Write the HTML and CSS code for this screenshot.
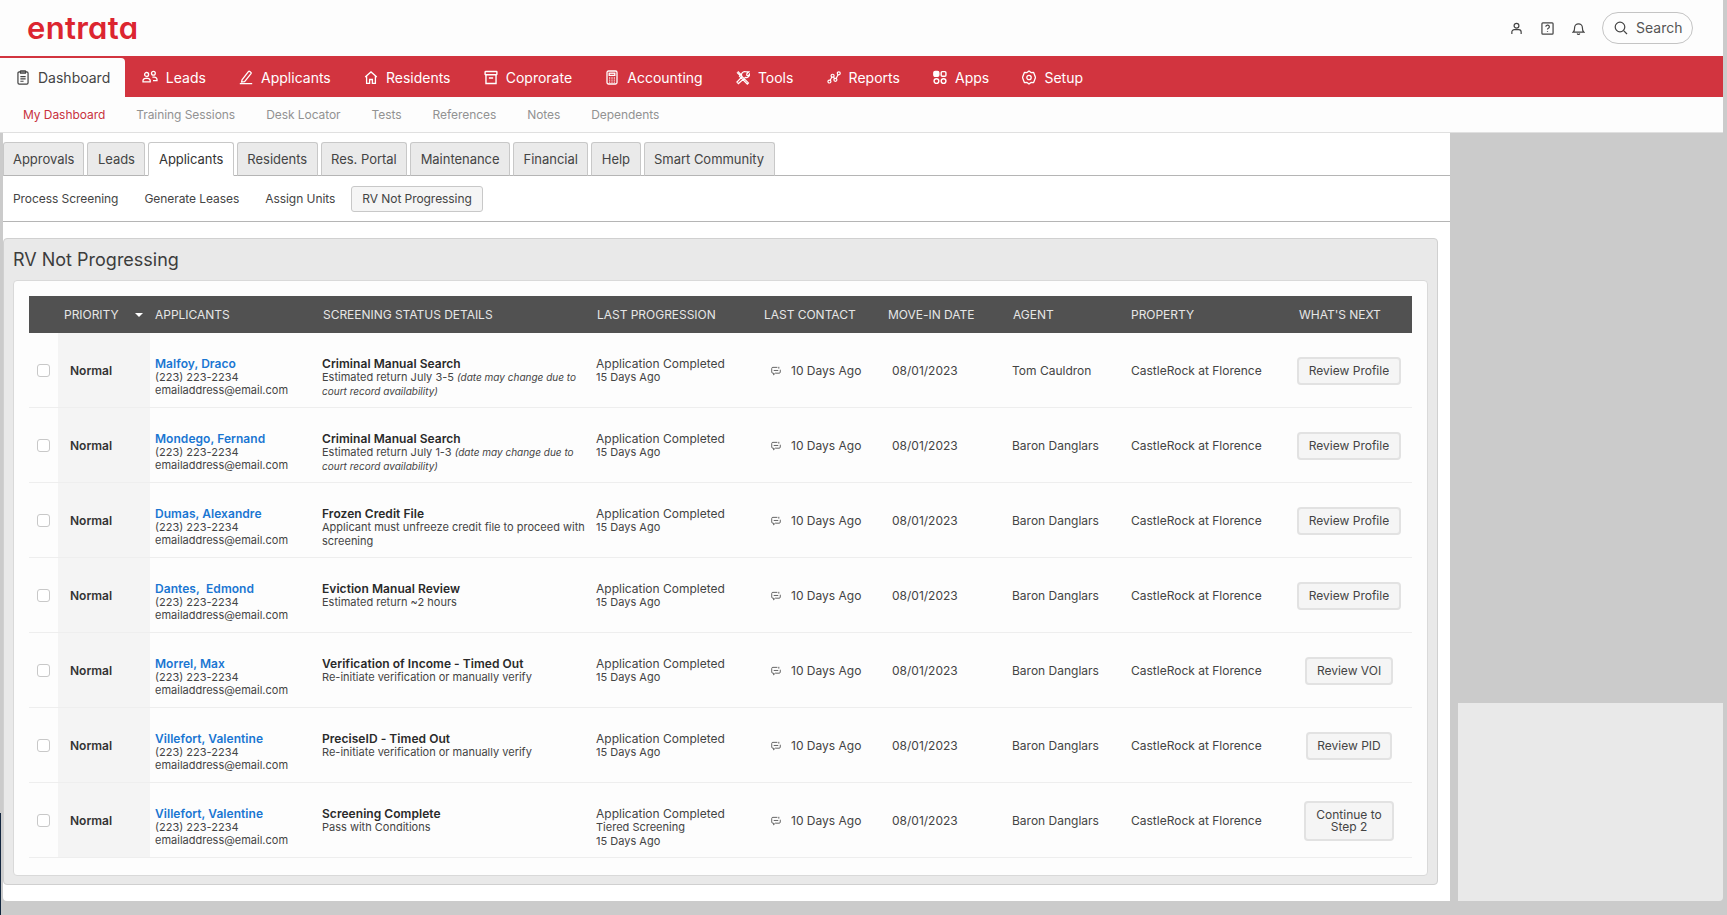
FILE: index.html
```html
<!DOCTYPE html>
<html lang="en">
<head>
<meta charset="utf-8">
<title>RV Not Progressing</title>
<link rel="stylesheet" href="styles.css">
</head>
<body>
<svg class="sprite" aria-hidden="true">
  <symbol id="i-dash" viewBox="0 0 14 16"><rect x="1.6" y="2" width="10.8" height="13" rx="1.4"/><rect x="4.2" y="0.8" width="5.6" height="2.6" rx=".6"/><path d="M4.2 7h5.6M4.2 9.5h5.6M4.2 12h3.4"/></symbol>
  <symbol id="i-leads" viewBox="0 0 16 14"><circle cx="4.6" cy="4" r="2"/><circle cx="11.4" cy="2.8" r="1.9"/><path d="M1 11.4V10a2.6 2.6 0 0 1 2.6-2.2h2A2.6 2.6 0 0 1 8.2 10v1.4zM10.4 6.6h1.8A2.6 2.6 0 0 1 15 9v1.2h-4"/></symbol>
  <symbol id="i-pen" viewBox="0 0 14 14"><path d="M3 9.4 9.4 1.2a1 1 0 0 1 1.4-.2l1 .8a1 1 0 0 1 .2 1.4L5.6 11.2l-3 .4zM.8 13.2h12.4"/></symbol>
  <symbol id="i-home" viewBox="0 0 14 14"><path d="M1.2 6.4 7 1.4l5.8 5M2.6 5.4v7.4h3V9h2.8v3.8h3V5.4"/></symbol>
  <symbol id="i-box" viewBox="0 0 13 14"><rect x="1" y="1.4" width="11" height="3" rx=".4"/><path d="M1.8 4.4v8.2h9.4V4.4M4.5 7.4h4"/></symbol>
  <symbol id="i-calc" viewBox="0 0 12 15"><rect x="1" y="1" width="10" height="13" rx="1.5"/><rect x="3.2" y="3.2" width="5.6" height="2.2"/><path d="M3.2 8h1M5.5 8h1M7.8 8h1M3.2 10.2h1M5.5 10.2h1M7.8 10.2h1M3.2 12.2h1M5.5 12.2h1M7.8 12.2h1"/></symbol>
  <symbol id="i-tools" viewBox="0 0 15 15"><path d="M2 1 5 4 4 5 1 2M4.5 4.5l8.8 8.8-1.2 1.2-8.8-8.8M13.8 1.4l-2.3 2.2.2 1.6 1.6.2 1.2-1.6a3.4 3.4 0 0 1-4.4 3.6L2.6 14 1 12.4l5.6-5.8a3.4 3.4 0 0 1 4-5.2z"/></symbol>
  <symbol id="i-reports" viewBox="0 0 15 15"><circle cx="2.6" cy="11.8" r="1.6"/><circle cx="6" cy="5.6" r="1.6"/><circle cx="9" cy="10" r="1.6"/><circle cx="12.6" cy="3" r="1.6"/><path d="M3.4 10.4l1.8-3.4M7 7l1.2 1.6M9.8 8.6l2-4"/></symbol>
  <symbol id="i-apps" viewBox="0 0 13 13"><rect class="solid" x=".8" y=".8" width="4.6" height="4.6" rx="1.2"/><rect x="7.6" y="1" width="4.4" height="4.4" rx="1"/><circle cx="3.2" cy="9.8" r="2.2"/><circle cx="9.8" cy="9.8" r="2.2"/></symbol>
  <symbol id="i-gear" viewBox="0 0 14 15"><path d="M7 1 9 2.600l2.600-.2.9 2.400 1 2.700-1 2.700-.9 2.400L9 12.400 7 14l-2-1.600-2.600.2-.9-2.400L.5 7.500l1-2.700.9-2.400L5 2.600z" stroke-linejoin="round"/><circle cx="7" cy="7.500" r="2.200"/></symbol>
  <symbol id="i-chat" viewBox="0 0 11 10"><path d="M7 1H2A1.200 1.200 0 0 0 .8 2.200v4A1.200 1.200 0 0 0 2 7.400h.8v1.800l2-1.800H9a1.200 1.200 0 0 0 1.200-1.200V3.600M3 4.400h5M8.600 .4v2"/></symbol>
</svg>

<div class="dark-edge"></div>

<header class="top">
  <div class="brand-row">
    <div class="logo">entrata</div>
    <div class="tools">
      <svg class="ti" viewBox="0 0 14 14"><circle cx="7" cy="4" r="2.600"/><path d="M2 13v-2.200A2.600 2.600 0 0 1 4.600 8.200h4.800A2.600 2.600 0 0 1 12 10.800V13"/></svg>
      <svg class="ti" viewBox="0 0 14 14"><rect x="1" y="1" width="12" height="12" rx="1"/><path d="M5.200 5.200A1.900 1.900 0 1 1 7.600 7c-.5.2-.6.6-.6 1.200M7 9.600v1"/></svg>
      <svg class="ti" viewBox="0 0 14 14"><path d="M1.400 10.800c1.200-1 1.400-2 1.400-4.600a4.200 4.200 0 0 1 8.400 0c0 2.600.2 3.600 1.400 4.600zM5.600 12.400a1.500 1.500 0 0 0 2.800 0"/></svg>
      <div class="search">
        <svg class="si" viewBox="0 0 14 14"><circle cx="6" cy="6" r="4.800"/><path d="M9.600 9.600 13 13"/></svg>
        <span>Search</span>
      </div>
    </div>
  </div>
  <nav class="mainnav">
    <a class="mn active"><svg class="mi"><use href="#i-dash"/></svg>Dashboard</a>
    <a class="mn"><svg class="mi wide"><use href="#i-leads"/></svg>Leads</a>
    <a class="mn"><svg class="mi"><use href="#i-pen"/></svg>Applicants</a>
    <a class="mn"><svg class="mi"><use href="#i-home"/></svg>Residents</a>
    <a class="mn"><svg class="mi"><use href="#i-box"/></svg>Coprorate</a>
    <a class="mn"><svg class="mi"><use href="#i-calc"/></svg>Accounting</a>
    <a class="mn"><svg class="mi"><use href="#i-tools"/></svg>Tools</a>
    <a class="mn"><svg class="mi"><use href="#i-reports"/></svg>Reports</a>
    <a class="mn"><svg class="mi"><use href="#i-apps"/></svg>Apps</a>
    <a class="mn"><svg class="mi"><use href="#i-gear"/></svg>Setup</a>
  </nav>
  <nav class="subnav">
    <a class="on">My Dashboard</a><a>Training Sessions</a><a>Desk Locator</a><a>Tests</a><a>References</a><a>Notes</a><a>Dependents</a>
  </nav>
</header>

<div class="body-row">
  <main class="content">
    <div class="tabs">
      <a class="tab">Approvals</a><a class="tab">Leads</a><a class="tab sel">Applicants</a><a class="tab">Residents</a><a class="tab">Res. Portal</a><a class="tab">Maintenance</a><a class="tab">Financial</a><a class="tab">Help</a><a class="tab">Smart Community</a>
    </div>
    <div class="subtabs">
      <a>Process Screening</a><a>Generate Leases</a><a>Assign Units</a><a class="cur">RV Not Progressing</a>
    </div>
    <section class="panel">
      <h1>RV Not Progressing</h1>
      <div class="card">
        <table>
          <colgroup>
            <col class="c1"><col class="c2"><col class="c3"><col class="c4"><col class="c5"><col class="c6"><col class="c7"><col class="c8"><col class="c9"><col class="c10">
          </colgroup>
          <thead>
            <tr>
              <th></th>
              <th class="h-pri">PRIORITY<span class="caret"></span></th>
              <th class="h-app">APPLICANTS</th>
              <th class="h-scr">SCREENING STATUS DETAILS</th>
              <th class="h-lp">LAST PROGRESSION</th>
              <th class="h-lc">LAST CONTACT</th>
              <th class="h-mi">MOVE-IN DATE</th>
              <th class="h-ag">AGENT</th>
              <th class="h-pr">PROPERTY</th>
              <th class="h-nx">WHAT'S NEXT</th>
            </tr>
          </thead>
          <tbody>
            <tr>
              <td class="chk"><span class="box"></span></td><td class="pri">Normal</td>
              <td class="top app"><a class="name">Malfoy, Draco</a><br>(223) 223-2234<br>emailaddress@email.com</td>
              <td class="top scr"><b>Criminal Manual Search</b><br><span class="sm">Estimated return July 3-5 <i>(date may change due to court record availability)</i></span></td>
              <td class="top lp">Application Completed<br><span class="sm">15 Days Ago</span></td>
              <td class="lc"><svg class="chat"><use href="#i-chat"/></svg>10 Days Ago</td>
              <td class="mi-d">08/01/2023</td><td class="ag">Tom Cauldron</td><td class="pr">CastleRock at Florence</td>
              <td class="nx"><a class="btn">Review Profile</a></td>
            </tr>
            <tr>
              <td class="chk"><span class="box"></span></td><td class="pri">Normal</td>
              <td class="top app"><a class="name">Mondego, Fernand</a><br>(223) 223-2234<br>emailaddress@email.com</td>
              <td class="top scr"><b>Criminal Manual Search</b><br><span class="sm">Estimated return July 1-3 <i>(date may change due to court record availability)</i></span></td>
              <td class="top lp">Application Completed<br><span class="sm">15 Days Ago</span></td>
              <td class="lc"><svg class="chat"><use href="#i-chat"/></svg>10 Days Ago</td>
              <td class="mi-d">08/01/2023</td><td class="ag">Baron Danglars</td><td class="pr">CastleRock at Florence</td>
              <td class="nx"><a class="btn">Review Profile</a></td>
            </tr>
            <tr>
              <td class="chk"><span class="box"></span></td><td class="pri">Normal</td>
              <td class="top app"><a class="name">Dumas, Alexandre</a><br>(223) 223-2234<br>emailaddress@email.com</td>
              <td class="top scr"><b>Frozen Credit File</b><br><span class="sm">Applicant must unfreeze credit file to proceed with screening</span></td>
              <td class="top lp">Application Completed<br><span class="sm">15 Days Ago</span></td>
              <td class="lc"><svg class="chat"><use href="#i-chat"/></svg>10 Days Ago</td>
              <td class="mi-d">08/01/2023</td><td class="ag">Baron Danglars</td><td class="pr">CastleRock at Florence</td>
              <td class="nx"><a class="btn">Review Profile</a></td>
            </tr>
            <tr>
              <td class="chk"><span class="box"></span></td><td class="pri">Normal</td>
              <td class="top app"><a class="name">Dantes,&nbsp; Edmond</a><br>(223) 223-2234<br>emailaddress@email.com</td>
              <td class="top scr"><b>Eviction Manual Review</b><br><span class="sm">Estimated return ~2 hours</span></td>
              <td class="top lp">Application Completed<br><span class="sm">15 Days Ago</span></td>
              <td class="lc"><svg class="chat"><use href="#i-chat"/></svg>10 Days Ago</td>
              <td class="mi-d">08/01/2023</td><td class="ag">Baron Danglars</td><td class="pr">CastleRock at Florence</td>
              <td class="nx"><a class="btn">Review Profile</a></td>
            </tr>
            <tr>
              <td class="chk"><span class="box"></span></td><td class="pri">Normal</td>
              <td class="top app"><a class="name">Morrel, Max</a><br>(223) 223-2234<br>emailaddress@email.com</td>
              <td class="top scr"><b>Verification of Income - Timed Out</b><br><span class="sm">Re-initiate verification or manually verify</span></td>
              <td class="top lp">Application Completed<br><span class="sm">15 Days Ago</span></td>
              <td class="lc"><svg class="chat"><use href="#i-chat"/></svg>10 Days Ago</td>
              <td class="mi-d">08/01/2023</td><td class="ag">Baron Danglars</td><td class="pr">CastleRock at Florence</td>
              <td class="nx"><a class="btn">Review VOI</a></td>
            </tr>
            <tr>
              <td class="chk"><span class="box"></span></td><td class="pri">Normal</td>
              <td class="top app"><a class="name">Villefort, Valentine</a><br>(223) 223-2234<br>emailaddress@email.com</td>
              <td class="top scr"><b>PreciseID - Timed Out</b><br><span class="sm">Re-initiate verification or manually verify</span></td>
              <td class="top lp">Application Completed<br><span class="sm">15 Days Ago</span></td>
              <td class="lc"><svg class="chat"><use href="#i-chat"/></svg>10 Days Ago</td>
              <td class="mi-d">08/01/2023</td><td class="ag">Baron Danglars</td><td class="pr">CastleRock at Florence</td>
              <td class="nx"><a class="btn">Review PID</a></td>
            </tr>
            <tr>
              <td class="chk"><span class="box"></span></td><td class="pri">Normal</td>
              <td class="top app"><a class="name">Villefort, Valentine</a><br>(223) 223-2234<br>emailaddress@email.com</td>
              <td class="top scr"><b>Screening Complete</b><br><span class="sm">Pass with Conditions</span></td>
              <td class="top lp">Application Completed<br><span class="sm">Tiered Screening</span><br><span class="sm">15 Days Ago</span></td>
              <td class="lc"><svg class="chat"><use href="#i-chat"/></svg>10 Days Ago</td>
              <td class="mi-d">08/01/2023</td><td class="ag">Baron Danglars</td><td class="pr">CastleRock at Florence</td>
              <td class="nx"><a class="btn two">Continue to<br>Step 2</a></td>
            </tr>
          </tbody>
        </table>
      </div>
    </section>
  </main>
  <aside class="side"><div class="side-panel"></div></aside>
</div>
</body>
</html>
```

FILE: styles.css
```css
* { box-sizing: border-box; }
html, body { margin: 0; height: 915px; overflow: hidden; }
body { background: #cbcbcb; font-family: Inter, "Liberation Sans", sans-serif; font-size: 12px; color: #444; position: relative; }
.sprite { display: none; }
.dark-edge { position: absolute; left: 0; top: 813px; width: 1px; height: 102px; background: #12263f; }

.top { width: 1723px; background: #fdfdfd; }
.brand-row { height: 56px; display: flex; align-items: center; justify-content: space-between; padding: 0 30px 0 27px; }
.logo { font-family: Inter, sans-serif; font-weight: 600; font-size: 31px; line-height: 40px; color: #dc2530; letter-spacing: 0.3px; margin-top: -1px; font-feature-settings: "cv11" 1; }
.tools { display: flex; align-items: center; }
.ti { width: 13px; height: 13px; margin-right: 18px; fill: none; stroke: #444; stroke-width: 1.3; }
.search { width: 91px; height: 32px; margin-left: -1px; margin-top: -1px; border: 1px solid #c4c4c4; border-radius: 16px; display: flex; align-items: center; padding-left: 11px; font-size: 14px; color: #555; }
.si { width: 14px; height: 14px; margin-right: 8px; fill: none; stroke: #444; stroke-width: 1.2; }

.mainnav { height: 41px; background: #d2343f; display: flex; align-items: stretch; }
.mn { display: flex; align-items: center; color: #fff; font-size: 14px; padding: 2px 16.6px 0; white-space: nowrap; }
.mn.active { background: #fdfdfd; color: #444; height: 39px; margin-top: 2px; border-top-right-radius: 4px; padding: 0 15px 0 16px; }
.mi { width: 14px; height: 15px; margin-right: 8px; fill: none; stroke: #fff; stroke-width: 1.3; }
.mi.wide { width: 16px; }
.mn.active .mi { stroke: #444; }
.solid { fill: #fff; }

.subnav { height: 36px; display: flex; align-items: center; padding: 0 0 1px 23px; border-bottom: 1px solid #e0e0e0; gap: 31px; color: #929292; font-size: 12px; letter-spacing: -0.06px; }
.subnav .on { color: #c8323d; }

.body-row { display: flex; height: 768px; margin-left: 3px; }
.content { width: 1447px; background: #fff; border-bottom-left-radius: 4px; }

.tabs { height: 43px; padding: 9px 0 0; display: flex; gap: 3px; border-bottom: 1px solid #b5b5b5; }
.tab { height: 34px; padding: 0 9.5px; display: flex; align-items: center; font-size: 13px; letter-spacing: -0.03px; color: #444; background: #eaeaea; border: 1px solid #c8c8c8; border-bottom: 1px solid #b5b5b5; border-radius: 3px 3px 0 0; white-space: nowrap; }
.tab:first-child { padding: 0 9px; }
.tab.sel { background: #fff; border-bottom-color: #fff; color: #333; }

.subtabs { height: 46px; display: flex; align-items: center; padding-left: 10px; gap: 26px; border-bottom: 1px solid #b5b5b5; font-size: 12px; letter-spacing: -0.06px; color: #444; }
.subtabs .cur { margin-left: -10px; height: 26px; display: flex; align-items: center; padding: 0 10px; background: #f5f5f5; border: 1px solid #c8c8c8; border-radius: 3px; }

.panel { margin: 16px 12px 0 0; height: 647px; background: #e9e9e9; border: 1px solid #d0d0d0; border-radius: 4px; padding: 0 9px; }
.panel h1 { margin: 0; height: 41px; display: flex; align-items: center; font-size: 18px; font-weight: 400; color: #3c3c3c; }
.card { height: 596px; background: #fdfdfd; border: 1px solid #d9d9d9; border-radius: 4px; padding: 15px 15px 0; }

table { border-collapse: separate; border-spacing: 0; table-layout: fixed; width: 1383px; }
.c1 { width: 29px; } .c2 { width: 92px; } .c3 { width: 167px; } .c4 { width: 273px; } .c5 { width: 168px; }
.c6 { width: 125px; } .c7 { width: 124px; } .c8 { width: 118px; } .c9 { width: 168px; } .c10 { width: 119px; }

thead tr { height: 37px; background: #515151; }
th { padding: 0; text-align: left; font-weight: 400; font-size: 12px; letter-spacing: -0.03px; color: #e6e6e6; white-space: nowrap; }
.h-pri { padding-left: 6px; }
.caret { display: inline-block; width: 0; height: 0; margin-left: 16px; vertical-align: 2px; border-left: 4px solid transparent; border-right: 4px solid transparent; border-top: 4px solid #fff; }
.h-app { padding-left: 5px; }
.h-scr { padding-left: 6px; }
.h-lp { padding-left: 7px; }
.h-lc { padding-left: 6px; }
.h-mi { padding-left: 5px; }
.h-ag { padding-left: 6px; }
.h-pr, .h-nx { padding-left: 6px; }

tbody tr { height: 75px; }
td { padding: 1px 0 0; vertical-align: middle; font-size: 12px; line-height: 13.2px; color: #444; border-bottom: 1px solid #eeeeee; }
td.top { vertical-align: top; padding-top: 24px; }
.chk { padding-left: 8px; }
.box { display: block; width: 13px; height: 13px; background: #fff; border: 1px solid #c8c8c8; border-radius: 3px; }
.pri { background: #f4f4f4; font-weight: 600; color: #333; padding-left: 12px; }
.app { padding-left: 5px; font-size: 11px; }
.name { color: #1a76d2; font-size: 12px; font-weight: 600; letter-spacing: 0.05px; }
td.scr { padding: 24px 2px 0 5px; }
.scr b { font-weight: 600; color: #2a2a2a; letter-spacing: 0.05px; }
.sm { font-size: 11px; }
.sm i { font-size: 10px; }
.lp { padding-left: 6px; }
.lc { padding-left: 13px; white-space: nowrap; }
.chat { width: 10px; height: 10px; margin-right: 10px; fill: none; stroke: #555; stroke-width: 1; vertical-align: -1px; }
.mi-d { padding-left: 9px; }
.ag { padding-left: 5px; }
.pr { padding-left: 6px; }
.nx { text-align: center; padding-right: 7px; }
.btn { display: inline-block; height: 28px; line-height: 24px; padding: 0 9.5px; background: #f5f5f5; border: 2px solid #e2e2e2; border-radius: 4px; color: #444; white-space: nowrap; }
.btn.two { height: 40px; line-height: 12px; padding: 6px 10.5px 0; }

.side { width: 273px; display: flex; flex-direction: column; justify-content: flex-end; padding-left: 8px; }
.side-panel { height: 198px; background: #e9e9e9; border-bottom-right-radius: 4px; }
```
